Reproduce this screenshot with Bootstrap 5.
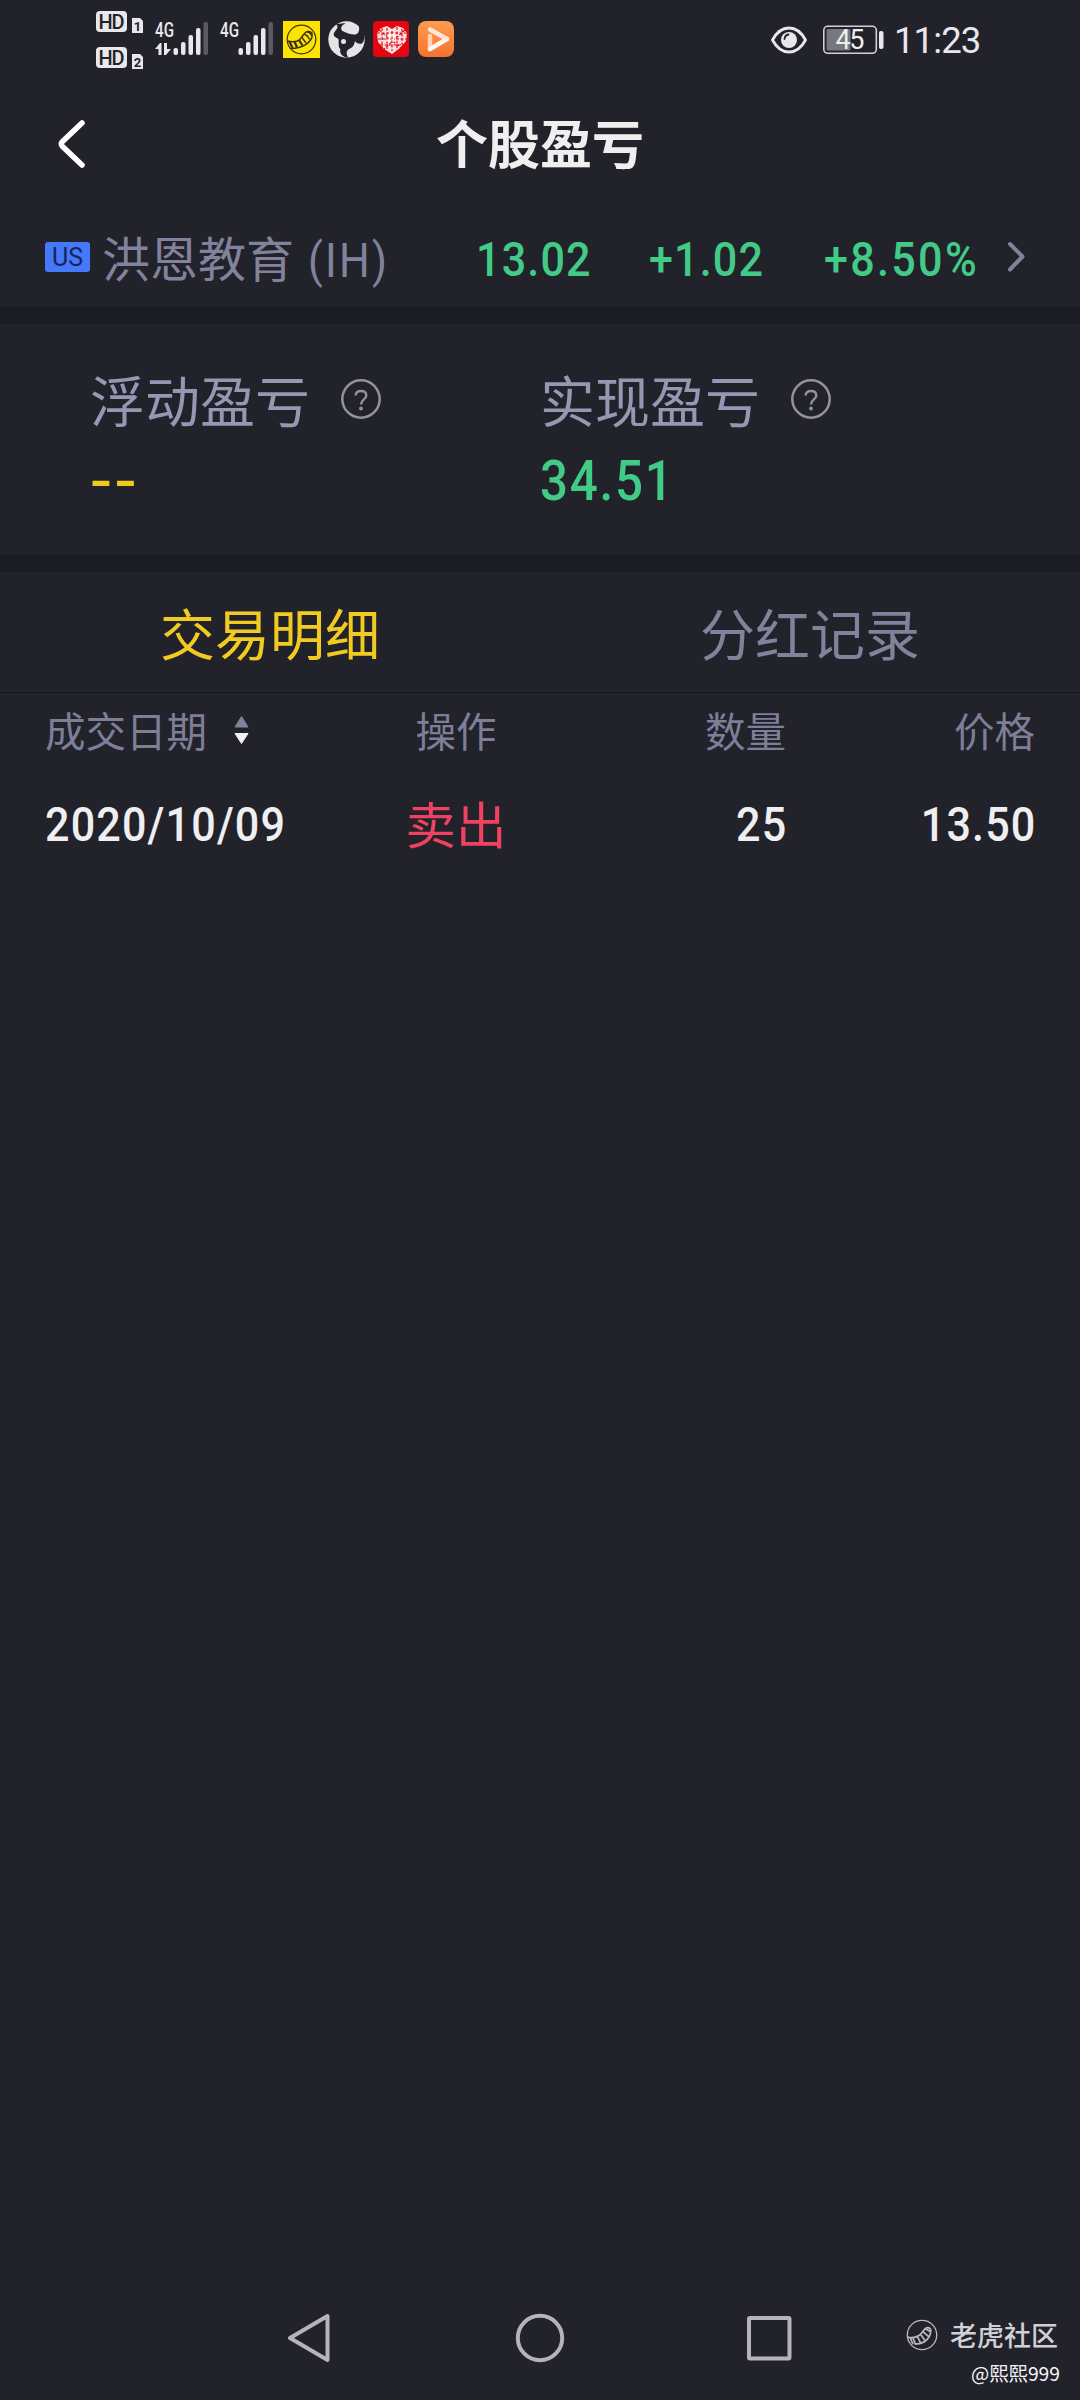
<!DOCTYPE html>
<html lang="zh-CN">
<head>
<meta charset="utf-8">
<meta name="viewport" content="width=device-width, initial-scale=1">
<title>个股盈亏</title>
<link rel="stylesheet" href="https://cdn.jsdelivr.net/npm/bootstrap@5.3.0/dist/css/bootstrap.min.css">
<style>
  body { background: #22222b; color: #efeff2; font-family: "Noto Sans CJK SC", sans-serif; width: 1080px; height: 2400px; overflow: hidden; }
  svg { display: block; flex: none; }
  .status { height: 80px; padding-left: 96px; padding-right: 98px; }
  .status-left { padding-top: 11px; }
  .clock { font: 400 36.5px/40px Roboto, sans-serif; letter-spacing: -.9px; color: #e8e8ec; width: 87px; margin-left: 10px; margin-right: 1px; padding-top: 1px; white-space: nowrap; }
  .titlebar { height: 128px; padding: 0 57px; }
  .titlebar h1 { font-size: 52px; font-weight: 700; line-height: 60px; margin: 0 28px 4px 0; color: #efefef; }
  .num { font-family: Roboto, sans-serif; font-weight: 500; white-space: nowrap; display: inline-block; transform: scaleX(.88); transform-origin: 0 50%; line-height: 60px; font-size: 49px; letter-spacing: 1.3px; }
  .num-end { transform-origin: 100% 50%; margin-right: -1.3px; }
  .up { color: #42cb86; }
  .muted { color: #82829c; }
  .quote { height: 98px; padding-left: 45px; }
  .market { background: #4678fb; color: #15255c; border-radius: 3px; width: 45px; height: 30px; font: 400 25px/31px Roboto, sans-serif; text-align: center; }
  .stock { font-size: 48px; line-height: 60px; width: 386px; padding-left: 12px; white-space: nowrap; margin-top: 2px; }
  .stock .num { margin-left: 14px; font-weight: 400; letter-spacing: 2.6px; }
  .prices { padding-top: 5px; }
  .percent { letter-spacing: 2.6px; }
  .band { height: 18px; background: #1b1b24; }
  .stats { height: 230px; padding: 44px 0 0 90px; }
  .stat { width: 450px; }
  .stat-label { font-size: 55px; line-height: 60px; color: #9697b3; }
  .stat-label svg { margin-left: 31px; margin-top: 1px; }
  .stat-value { font-size: 56px; margin-top: 23px; letter-spacing: 2px; }
  .dashes { color: #efca1c; transform: scaleX(1.16); }
  .tabs { height: 121px; border-bottom: 1px solid #17171f; }
  .tab-item { font-size: 55px; line-height: 60px; text-align: center; margin-top: -3px; }
  .active-tab { color: #f2cb20; }
  .grid-row { padding: 0 45px; }
  .grid-head { height: 74px; font-size: 40.5px; line-height: 50px; color: #7e7e98; }
  .grid-data { height: 114px; }
  .c1 { width: 330px; } .c2 { width: 162px; text-align: center; } .c3 { width: 249px; text-align: right; } .c4 { width: 249px; text-align: right; }
  .grid-data .c1, .grid-data .c3, .grid-data .c4 { padding-top: 2px; }
  .sell { color: #ef4160; font-size: 50.5px; line-height: 60px; margin-top: -4px; }
  .navkeys { height: 124px; padding-left: 288px; padding-right: 20px; }
  .brand { font-size: 27px; font-weight: 500; line-height: 34px; color: #d0d0d6; margin-right: 2px; }
  .author { font-size: 19.3px; line-height: 24px; color: #f4f4f6; margin-top: 9px; }
</style>
<script src="https://cdn.jsdelivr.net/npm/bootstrap@5.3.0/dist/js/bootstrap.bundle.min.js"></script>
</head>
<body class="d-flex flex-column m-0">

<header class="status d-flex justify-content-between">
  <div class="status-left d-flex">
    <svg width="182" height="60" viewBox="96 11 182 60" fill="#e8e8ec" font-family="Roboto, sans-serif">
      <rect x="96" y="11" width="31" height="21" rx="4"/><rect x="96" y="47" width="31" height="21" rx="4"/>
      <g fill="#22222b" font-weight="500" font-size="20" text-anchor="middle">
        <text x="111.500" y="28.500" textLength="26">HD</text><text x="111.500" y="64.500" textLength="26">HD</text>
      </g>
      <path d="M132 18h8l3 3v12h-11zM132 54h8l3 3v12h-11z"/>
      <g fill="#22222b" font-weight="700" font-size="13" text-anchor="middle"><text x="137.500" y="30.500">1</text><text x="137.500" y="66.500">2</text></g>
      <g font-size="20" font-weight="500"><text x="155" y="37" textLength="19" lengthAdjust="spacingAndGlyphs">4G</text><text x="220" y="37" textLength="19" lengthAdjust="spacingAndGlyphs">4G</text></g>
      <path d="M155 49l5-6h1.500v12h-3v-6zM164 43h3v6h4l-5 6h-2z"/>
      <g id="bars">
        <rect x="173.500" y="48" width="4.500" height="7" rx="2"/><rect x="181" y="42" width="4.500" height="13" rx="2"/>
        <rect x="188.500" y="35" width="4.500" height="20" rx="2"/><rect x="196" y="28" width="4.500" height="27" rx="2"/>
        <rect x="203.500" y="22" width="4.500" height="33" rx="2" fill="#5a5a63"/>
      </g>
      <use href="#bars" x="65"/>
    </svg>
    <div class="d-flex" style="padding:10px 0 0 5px;gap:8px">
      <svg width="37" height="37" viewBox="0 0 37 37"><rect width="37" height="37" fill="#fde400"/><g fill="none" stroke="#3b3010"><circle cx="18.500" cy="18.500" r="14.300" stroke-width="1.200"/><path d="M4.500 20q5 1.500 10 0c5-2 6-9 10-9.500 4-.5 5.500 2 4.500 5.500-2 6-9 11-21 11.500" stroke-width="1.500"/><path d="M6.500 20.500l3 6.500M11.500 20.500l2.500 6M16 19l3.500 5.500" stroke-width="2.200"/><path d="M19 16.500l4 5.500M21.500 13.500q3 .5 5 5M24 11q3.500 0 4.500 4" stroke-width="1.300"/></g></svg>
      <svg width="37" height="37" viewBox="0 0 37 37"><circle cx="18.500" cy="18.500" r="18.200" fill="#e4e4e7"/><path d="M8 3C11 3 15 1.500 17.500 2.500 13 4 12 8 14.500 10 18 12 24 14 27.500 13.500 31 12.500 32 8 30.500 4 37 9 38 17 34.500 22 32 24 28 22 27 20 26 25 24 27 21 28 18 30 18 33 20.500 37 14 36 11 32 12.500 28 10 27 11 22 10.500 18 7 16 3 15 8 9 10 7 10 5 8 3z" fill="#22222b"/><circle cx="15.500" cy="20.500" r="2.500" fill="#e4e4e7"/></svg>
      <svg width="37" height="37" viewBox="0 0 37 37"><rect width="36" height="36" rx="4" fill="#e40510"/><path d="M19 8l5-3 6 2 4 5-1 8-6 7-8 6-8-5-6-7-1-9 4-5 6-2z" fill="#f7dfe0"/><path d="M9 7v22M14 7v22M19 10v20M24 6v22M29 8v16M4 12h30M5 18h28M7 24h24M6 9l22 18M32 9L11 28" stroke="#e40510" stroke-width="1.100" stroke-dasharray="3 1.500"/><path d="M17 12l-1 9M21 12l-1 9M14 15h9M14 19h9" stroke="#fff" stroke-width="1.200"/></svg>
      <svg width="37" height="37" viewBox="0 0 37 37"><defs><linearGradient id="og" x1="0" y1="0" x2="0" y2="1"><stop stop-color="#ff9c50"/><stop offset="1" stop-color="#f3722f"/></linearGradient></defs><rect width="36" height="36" rx="8" fill="url(#og)"/><g fill="none" stroke-width="4.500" stroke-linecap="round" stroke-linejoin="round"><path d="M12 15v13" stroke="#ffd2b0"/><path d="M12 28l17-10" stroke="#fff6ef"/><path d="M12 8.500l17 9.500" stroke="#ffe8d8"/></g></svg>
    </div>
  </div>
  <div class="d-flex align-items-center">
    <svg width="36" height="28" viewBox="0 0 36 28"><path d="M1.500 14C10-2 26-2 34.500 14 26 30 10 30 1.500 14z" fill="none" stroke="#e8e8ec" stroke-width="2.800"/><circle cx="18" cy="14" r="8" fill="#e8e8ec"/><path d="M13.500 13q.5-4 4-4.500" fill="none" stroke="#22222b" stroke-width="1.800" stroke-linecap="round"/></svg>
    <svg width="61" height="30" viewBox="0 0 61 30" style="margin-left:16px"><rect x=".8" y="1.300" width="52.500" height="27" rx="4" fill="none" stroke="#d0d0d5" stroke-width="1.600"/><rect x="3.500" y="4" width="24" height="21.500" rx="1.500" fill="#77777e"/><rect x="56" y="6" width="4.500" height="18" rx="2" fill="#e8e8ec"/><text x="27" y="24.300" font-family="Roboto, sans-serif" font-size="27" fill="#efeff2" text-anchor="middle" textLength="29">45</text></svg>
    <div class="clock">11:23</div>
  </div>
</header>

<nav class="titlebar d-flex align-items-center">
  <svg width="28" height="48" viewBox="0 0 28 48"><path d="M25 3L5.500 21.500q-2.500 2.500 0 5L25 45" fill="none" stroke="#fff" stroke-width="5.500" stroke-linecap="round" stroke-linejoin="round"/></svg>
  <h1 class="flex-grow-1 text-center">个股盈亏</h1>
</nav>

<section class="quote d-flex align-items-center">
  <span class="market">US</span>
  <div class="stock muted">洪恩教育<span class="num">(IH)</span></div>
  <div class="prices up d-flex flex-grow-1">
    <span class="num" style="width:173px">13.02</span>
    <span class="num" style="width:175px">+1.02</span>
    <span class="num percent">+8.50%</span>
  </div>
  <svg width="20" height="32" viewBox="0 0 20 32" style="margin-right:53px"><path d="M3 3l12.500 12.500L3 28.500" fill="none" stroke="#82829c" stroke-width="4" stroke-linecap="round" stroke-linejoin="round"/></svg>
</section>
<div class="band"></div>

<section class="stats d-flex">
  <div class="stat">
    <div class="stat-label d-flex align-items-center">浮动盈亏
      <svg width="40" height="40" viewBox="0 0 40 40"><circle cx="20" cy="20" r="18.700" fill="none" stroke="#92919e" stroke-width="2.500"/><path d="M14.700 16.500q0-4.500 5.300-4.500t5.300 4.500c0 4-5.300 4-5.300 9" fill="none" stroke="#92919e" stroke-width="2.400"/><circle cx="20" cy="29.500" r="1.900" fill="#92919e"/></svg>
    </div>
    <div class="num stat-value dashes">--</div>
  </div>
  <div class="stat">
    <div class="stat-label d-flex align-items-center">实现盈亏
      <svg width="40" height="40" viewBox="0 0 40 40"><circle cx="20" cy="20" r="18.700" fill="none" stroke="#92919e" stroke-width="2.500"/><path d="M14.700 16.500q0-4.500 5.300-4.500t5.300 4.500c0 4-5.300 4-5.300 9" fill="none" stroke="#92919e" stroke-width="2.400"/><circle cx="20" cy="29.500" r="1.900" fill="#92919e"/></svg>
    </div>
    <div class="num stat-value up">34.51</div>
  </div>
</section>
<div class="band"></div>

<nav class="tabs row g-0 align-items-center">
  <div class="tab-item col-6 active-tab">交易明细</div>
  <div class="tab-item col-6 muted">分红记录</div>
</nav>

<main class="flex-grow-1">
  <div class="grid-row grid-head d-flex align-items-center">
    <div class="c1 d-flex align-items-center">成交日期
      <svg width="15" height="30" viewBox="0 0 15 30" style="margin-left:27px"><path d="M1 12L7.500 1.500 14 12z" fill="#82829c" stroke="#82829c" stroke-linejoin="round"/><path d="M1 18.500h13L7.500 28.500z" fill="#f2f2f4" stroke="#f2f2f4" stroke-linejoin="round"/></svg>
    </div>
    <div class="c2">操作</div><div class="c3">数量</div><div class="c4">价格</div>
  </div>
  <div class="grid-row grid-data d-flex align-items-center">
    <div class="c1"><span class="num">2020/10/09</span></div>
    <div class="c2 sell">卖出</div>
    <div class="c3"><span class="num num-end">25</span></div>
    <div class="c4"><span class="num num-end">13.50</span></div>
  </div>
</main>

<footer class="navkeys d-flex">
  <svg width="504" height="124" viewBox="288 2276 504 124" fill="none" stroke="#b5b5b8" stroke-width="4" stroke-linejoin="round"><path d="M290 2338l37.500-22v44z"/><ellipse cx="540" cy="2338" rx="22.200" ry="22.200"/><rect x="749" y="2318" width="40.500" height="40.500" rx="1"/></svg>
  <div class="ms-auto text-end" style="padding-top:42px">
    <div class="d-flex align-items-center brand">
      <svg width="32" height="32" viewBox="0 0 37 37" style="margin-right:12px"><g fill="none" stroke="#b8b8be" stroke-width="1.500"><circle cx="18.500" cy="18.500" r="17"/><path d="M2 21q7 2 13-2c4-2 6-9 10-9 5 0 4 6 2 10-3 6-8 9-17 9M8 21.500l3 8M13 20l4 8M17 18l5 7M20 15l6 5M23 11.500l5 3M5 22l3 7" stroke-width="2"/></g></svg>
      <span>老虎社区</span>
    </div>
    <div class="author">@熙熙999</div>
  </div>
</footer>
</body>
</html>
